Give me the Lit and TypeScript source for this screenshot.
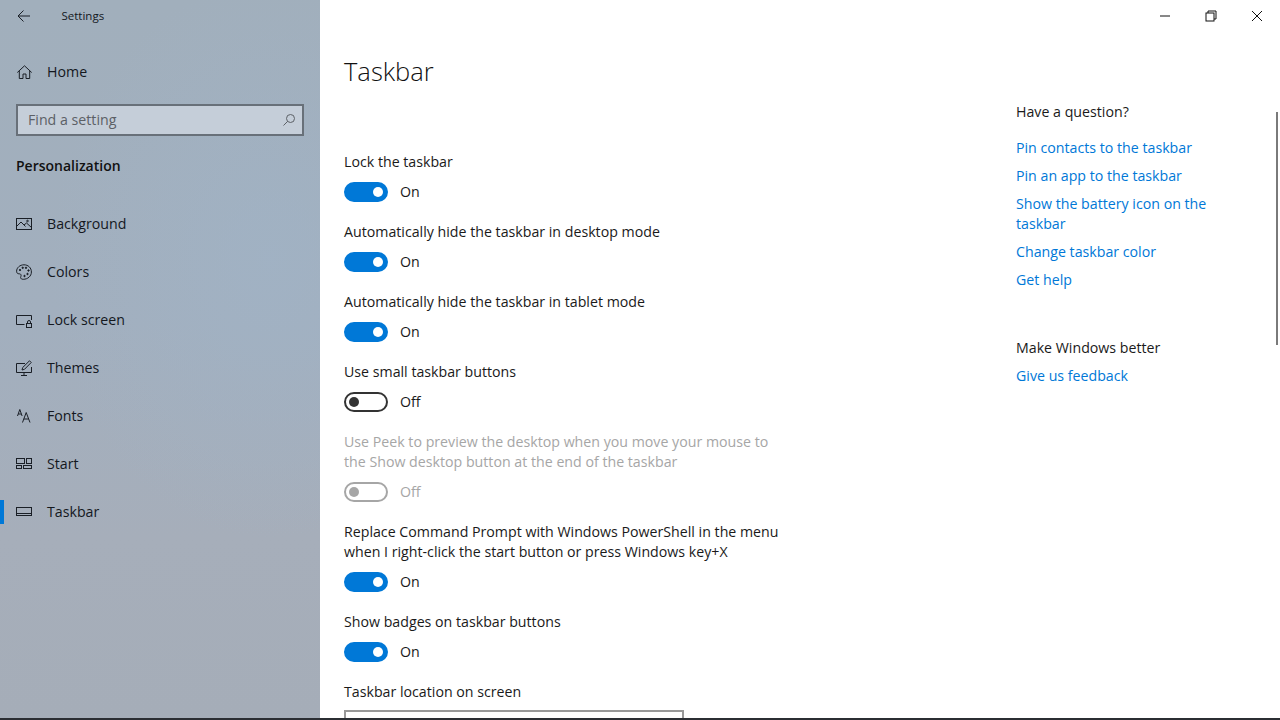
import { LitElement, html, css, svg } from "lit";
import { customElement } from "lit/decorators.js";

const ic = (body: unknown) => html`<svg class="ic" width="16" height="16" viewBox="0 0 16 16" fill="none" stroke="#1a1f26" stroke-width="1">${body}</svg>`;

const NAV: [string, unknown][] = [
  ["Background", svg`<rect x=".5" y="2.5" width="15" height="11"/><path d="M.5 10.5 5 6l4.500 4.500M8 9l2.500-2 5 4.500"/><circle cx="11.500" cy="5" r=".8"/>`],
  ["Colors", svg`<path d="M8 .8C3.8.8.6 3.8.6 7.2c0 1.900 1.100 2.600 2.300 2.600 1.300 0 2.200.4 2.200 1.600 0 .9-.5 1.300-.5 2.200 0 1 1 1.700 2.700 1.700 4.300 0 8.100-3.100 8.100-7.300C15.400 3.800 12.200.8 8 .8Z"/><circle cx="4" cy="6" r=".7" fill="#1a1f26"/><circle cx="6.700" cy="3.800" r=".7" fill="#1a1f26"/><circle cx="10" cy="3.800" r=".7" fill="#1a1f26"/><circle cx="12.500" cy="6.500" r=".7" fill="#1a1f26"/><circle cx="11.500" cy="10" r=".7" fill="#1a1f26"/><circle cx="8.500" cy="12" r=".7" fill="#1a1f26"/>`],
  ["Lock screen", svg`<path d="M8.500 12.500H.5v-9h15v4.500"/><rect x="10.500" y="11.500" width="5" height="4"/><path d="M11.500 11.500V10a1.500 1.500 0 0 1 3 0v1.500"/>`],
  ["Themes", svg`<path d="M9 3.500H.5v9h15V7M5 15.500h6M8 12.500v3"/><path d="m6 10 .7-2.500L13.500.8l1.700 1.700L8.500 9.300Z"/>`],
  ["Fonts", svg`<path d="m1.500 8 2.300-6.500L6.100 8M2.300 6h3M6.500 14.500 10.200 4.500l3.800 10M7.800 11h4.800"/>`],
  ["Start", svg`<rect x=".5" y="2.500" width="8" height="5"/><rect x="10.500" y="2.500" width="5" height="5"/><rect x=".5" y="9.500" width="5" height="3"/><rect x="7.500" y="9.500" width="8" height="3"/>`],
  ["Taskbar", svg`<rect x=".5" y="3.500" width="15" height="8"/><path d="M.5 9.500h15"/>`],
];

type Opt = { label: string[]; on: boolean; disabled?: boolean };
const OPTS: Opt[] = [
  { label: ["Lock the taskbar"], on: true },
  { label: ["Automatically hide the taskbar in desktop mode"], on: true },
  { label: ["Automatically hide the taskbar in tablet mode"], on: true },
  { label: ["Use small taskbar buttons"], on: false },
  { label: ["Use Peek to preview the desktop when you move your mouse to", "the Show desktop button at the end of the taskbar"], on: false, disabled: true },
  { label: ["Replace Command Prompt with Windows PowerShell in the menu", "when I right-click the start button or press Windows key+X"], on: true },
  { label: ["Show badges on taskbar buttons"], on: true },
];

@customElement("app-root")
export class AppRoot extends LitElement {
  static styles = css`
    :host { display: block; width: 1280px; height: 720px; overflow: hidden; background: #fff;
      font-family: "Open Sans", "Noto Sans", sans-serif; font-size: 14.2px; color: #000; }
    .win { display: flex; width: 1280px; height: 720px; box-sizing: border-box; overflow: hidden; border-bottom: 2px solid #2b2e33; position: relative; }
    .side { width: 320px; flex: none; display: flex; flex-direction: column; color: #14181e;
      background:
        radial-gradient(ellipse 220px 280px at 270px 260px, rgba(160,180,200,.55), rgba(160,180,200,0)),
        linear-gradient(180deg, #a1afbc 0%, #a2afbe 45%, #a6aeba 75%, #a5adb8 100%); }
    .titlebar { height: 32px; display: flex; align-items: center; flex: none; }
    .back { width: 48px; display: flex; justify-content: center; }
    .apptitle { margin-left: 13.5px; font-size: 11.5px; line-height: 14px; margin-bottom: 1px; }
    .navitem { height: 48px; display: flex; align-items: center; flex: none; position: relative; }
    .navitem span { margin-bottom: 1px; }
    .navitem .ic { margin-left: 16px; margin-right: 15px; flex: none; }
    .home { margin-top: 16px; }
    .search { margin: 8px 16px 0; height: 32px; box-sizing: border-box; border: 2px solid #687079; background: #c5ced9;
      display: flex; align-items: center; justify-content: space-between; padding: 0 7px 2px 10px; color: #5c6066; flex: none; }
    .search svg { margin-top: 2px; }
    .pers { margin: 17px 16px 0; height: 26px; line-height: 26px; font-weight: 600; font-size: 14px; flex: none; color: #111; }
    .navlist { margin-top: 21px; display: flex; flex-direction: column; }
    .sel::before { content: ""; position: absolute; left: 0; top: 12px; width: 4px; height: 24px; background: #0078d7; }
    .main { flex: 1; min-width: 0; position: relative; display: flex; }
    .col { width: 672px; padding-left: 24px; flex: none; }
    h1 { margin: 0; padding-top: 49px; height: 45px; line-height: 45px; font-size: 25.5px; font-weight: 300; color: #111; }
    .opts { margin-top: 58px; display: flex; flex-direction: column; }
    .opt { margin-bottom: 20px; }
    .lab { line-height: 20px; height: 20px; white-space: nowrap; color: #1a1a1a; }
    .row { display: flex; align-items: center; height: 20px; margin-top: 10px; }
    .tg { width: 44px; height: 20px; box-sizing: border-box; border-radius: 10px; position: relative; flex: none; border: 2px solid #333; }
    .tg::after { content: ""; position: absolute; top: 3px; width: 10px; height: 10px; border-radius: 50%; background: #333; left: 3px; }
    .tg.on { background: #0078d7; border-color: #0078d7; }
    .tg.on::after { background: #fff; left: auto; right: 3px; }
    .state { margin-left: 12px; color: #1a1a1a; margin-bottom: 1px; }
    .dis .lab, .dis .state { color: #a6a6a6; }
    .dis .tg { border-color: #a6a6a6; }
    .dis .tg::after { background: #a6a6a6; }
    .drop { width: 340px; height: 32px; box-sizing: border-box; border: 2px solid #999; margin-top: 8px; flex: none; }
    .help { position: absolute; left: 696px; top: 101px; width: 210px; }
    .help h2 { margin: 0; font-size: inherit; font-weight: 400; line-height: 22px; color: #1a1a1a; }
    .help a { display: block; color: #0078d7; line-height: 20px; margin-top: 8px; text-decoration: none; }
    .help h2 + a { margin-top: 15px; }
    .help .sec2 { margin-top: 47px; }
    .help .sec2 + a { margin-top: 7px; }
    .wc { position: absolute; top: 0; right: 0; display: flex; height: 32px; }
    .wc div { width: 46px; display: flex; align-items: center; justify-content: center; }
    .sb { position: absolute; right: 2px; top: 112px; width: 2px; height: 233px; background: #7a7a7a; }
  `;

  private opt(o: Opt) {
    return html`<div class="opt ${o.disabled ? "dis" : ""}">
      ${o.label.map((l) => html`<div class="lab">${l}</div>`)}
      <div class="row"><div class="tg ${o.on ? "on" : ""}"></div><span class="state">${o.on ? "On" : "Off"}</span></div>
    </div>`;
  }

  render() {
    return html`<div class="win">
      <aside class="side">
        <div class="titlebar">
          <div class="back"><svg width="16" height="16" viewBox="0 0 16 16" fill="none" stroke="#1a1f26"><path d="M14 8H2M7.500 2.500 2 8l5.500 5.500"/></svg></div>
          <span class="apptitle">Settings</span>
        </div>
        <div class="navitem home">${ic(svg`<path d="M1.300 8.500 8.500 1.800l7.200 6.700M3.300 7v7.500h3.700V10h3v4.500h3.700V7"/>`)}<span>Home</span></div>
        <div class="search"><span>Find a setting</span>
          <svg width="12" height="12" viewBox="0 0 12 12" fill="none" stroke="#5c6066"><circle cx="7.500" cy="4.500" r="4"/><path d="M4.700 7.300 .5 11.500"/></svg></div>
        <div class="pers">Personalization</div>
        <div class="navlist">
          ${NAV.map(([n, b]) => html`<div class="navitem ${n === "Taskbar" ? "sel" : ""}">${ic(b)}<span>${n}</span></div>`)}
        </div>
      </aside>
      <main class="main">
        <div class="col">
          <h1>Taskbar</h1>
          <div class="opts">
            ${OPTS.map((o) => this.opt(o))}
            <div class="lab">Taskbar location on screen</div>
            <div class="drop"></div>
          </div>
        </div>
        <div class="help">
          <h2>Have a question?</h2>
          <a>Pin contacts to the taskbar</a>
          <a>Pin an app to the taskbar</a>
          <a>Show the battery icon on the taskbar</a>
          <a>Change taskbar color</a>
          <a>Get help</a>
          <h2 class="sec2">Make Windows better</h2>
          <a>Give us feedback</a>
        </div>
        <div class="sb"></div>
        <div class="wc">
          <div><svg width="12" height="12" viewBox="0 0 12 12" stroke="#111"><path d="M1 6h10"/></svg></div>
          <div><svg width="12" height="12" viewBox="0 0 12 12" fill="none" stroke="#111"><path d="M3 3V1h8v8H9"/><rect x="1" y="3" width="8" height="8" fill="#fff"/></svg></div>
          <div><svg width="12" height="12" viewBox="0 0 12 12" stroke="#111"><path d="m1 1 10 10M11 1 1 11"/></svg></div>
        </div>
      </main>
    </div>`;
  }
}
